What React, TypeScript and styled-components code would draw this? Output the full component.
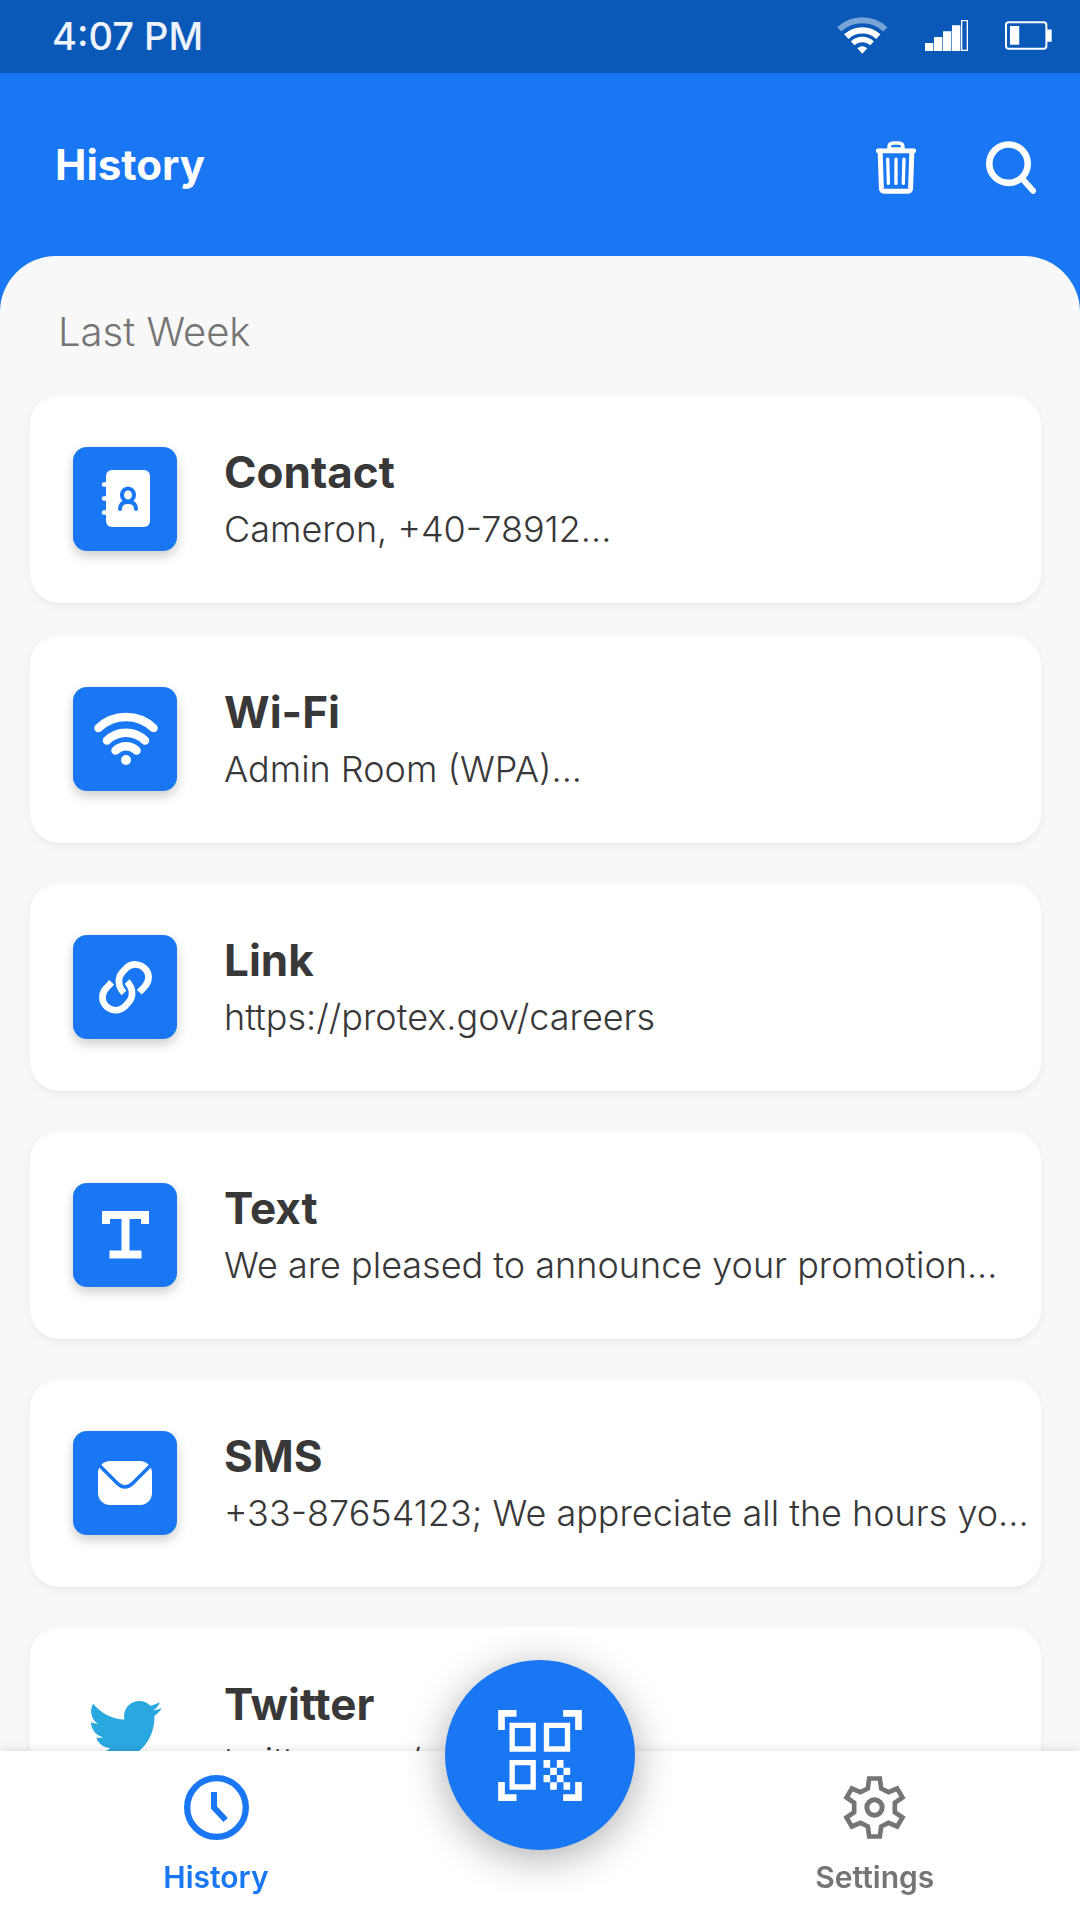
import React from "react";
import styled, { createGlobalStyle } from "styled-components";
import { FaTwitter } from "react-icons/fa";

const blue = "#1977f3";

const GlobalStyle = createGlobalStyle`
  * { box-sizing: border-box; }
  body {
    margin: 0;
    font-family: Inter, "Noto Sans", sans-serif;
    background: ${blue};
  }
  h1, h2, h3, p, ul { margin: 0; padding: 0; }
  svg { display: block; flex: none; }
`;

const Screen = styled.div`
  display: flex;
  flex-direction: column;
  height: 100vh;
  overflow: hidden;
  background: ${blue};
`;

const StatusBar = styled.div`
  display: flex;
  align-items: center;
  justify-content: space-between;
  height: 73px;
  flex: none;
  padding: 0 28px 2px 52px;
  background: #0a59b9;
  color: #eef3fc;
  font-size: 38px;
  font-weight: 500;
`;

const StatusIcons = styled.div`
  display: flex;
  align-items: center;
  gap: 37px;
`;

const Header = styled.header`
  display: flex;
  align-items: center;
  justify-content: space-between;
  height: 183px;
  flex: none;
  padding: 0 44px 0 55px;
  color: #fff;
`;

const Title = styled.h1`
  font-size: 42px;
  line-height: 54px;
  font-weight: 700;
`;

const Actions = styled.div`
  display: flex;
  align-items: center;
  gap: 70px;
  padding-top: 5px;
`;

const IconButton = styled.button`
  display: block;
  padding: 0;
  border: 0;
  background: none;
  color: inherit;
  cursor: pointer;
`;

const Sheet = styled.main`
  flex: 1;
  min-height: 0;
  overflow-y: auto;
  scrollbar-width: none;
  padding: 52px 39px 40px 30px;
  border-radius: 56px 56px 0 0;
  background: #f8f8f8;
`;

const Period = styled.h2`
  padding-left: 28px;
  margin-bottom: 39px;
  color: #757575;
  font-size: 40px;
  line-height: 48px;
  font-weight: 300;
`;

const List = styled.ul`
  list-style: none;
`;

const Card = styled.li`
  display: flex;
  align-items: center;
  gap: 47px;
  height: 208px;
  padding: 0 8px 0 43px;
  border-radius: 30px;
  background: #fff;
  box-shadow: 0 3px 10px rgba(0, 0, 0, 0.06);

  & + & { margin-top: 40px; }
  &:first-child + & { margin-top: 32px; }
`;

const Tile = styled.span<{ $plain?: boolean }>`
  display: flex;
  align-items: center;
  justify-content: center;
  width: 104px;
  height: 104px;
  flex: none;
  border-radius: 14px;
  color: ${(p) => (p.$plain ? "#29a8e0" : "#fff")};
  background: ${(p) => (p.$plain ? "none" : blue)};
  box-shadow: ${(p) => (p.$plain ? "none" : "0 5px 12px rgba(0, 0, 0, 0.2)")};
`;

const Entry = styled.div`
  min-width: 0;
  color: #383838;
  white-space: nowrap;
`;

const EntryTitle = styled.h3`
  font-size: 44px;
  line-height: 60px;
  font-weight: 700;
`;

const EntryText = styled.p`
  font-size: 36px;
  line-height: 54px;
  font-weight: 300;
`;

const Nav = styled.nav`
  position: relative;
  display: grid;
  grid-template-columns: 40% 1fr 38%;
  flex: none;
  background: #fff;
  box-shadow: 0 -2px 8px rgba(0, 0, 0, 0.1);
`;

const NavItem = styled.a<{ $active?: boolean }>`
  display: flex;
  flex-direction: column;
  align-items: center;
  gap: 17px;
  padding: 24px 0 23px;
  color: ${(p) => (p.$active ? blue : "#757575")};
  font-size: 30px;
  line-height: 40px;
  font-weight: 600;
  text-decoration: none;
`;

const Middle = styled.span``;

const ScanButton = styled.button`
  position: absolute;
  top: -91px;
  left: 50%;
  transform: translateX(-50%);
  display: flex;
  align-items: center;
  justify-content: center;
  width: 190px;
  height: 190px;
  padding: 0;
  border: 0;
  border-radius: 50%;
  background: ${blue};
  color: #fff;
  box-shadow: 0 8px 40px rgba(0, 0, 0, 0.32);
  cursor: pointer;
`;

const WifiStatus = () => (
  <svg width="51" height="37" viewBox="112 47 153 111" fill="none" stroke="#fff">
    <path d="M119 84A100 100 0 0 1 257 84" strokeWidth="18" opacity="0.45" />
    <path d="M140 106A70 70 0 0 1 236 106" strokeWidth="19" />
    <path d="M159 126A42 42 0 0 1 217 126" strokeWidth="16" />
    <path d="M188 157L173 141Q188 128 203 141Z" fill="#fff" stroke="none" />
  </svg>
);

const SignalStatus = () => (
  <svg width="43" height="31" viewBox="375 60 129 93" fill="#fff">
    <path d="M375 129h25v24h-25zM402 111h25v42h-25zM429 94h25v59h-25zM456 76h25v77h-25z" />
    <path d="M485 62h17v89h-17z" fill="none" stroke="#fff" strokeWidth="4" />
  </svg>
);

const BatteryStatus = () => (
  <svg width="47" height="29" viewBox="615 68 142 86" fill="#fff">
    <rect x="618" y="71" width="122" height="80" rx="8" fill="none" stroke="#fff" strokeWidth="6" />
    <path d="M741 93h15v37h-15zM630 82h28v57h-28z" />
  </svg>
);

const TrashIcon = () => (
  <svg width="40" height="53" viewBox="227 419 120 160" fill="none" stroke="currentColor" strokeLinecap="round">
    <path d="M266 446V438Q266 425 279 425H295Q308 425 308 438V446" strokeWidth="11" />
    <path d="M233 449H341" strokeWidth="14" />
    <path d="M239 449L243 563Q244 571 252 571H322Q330 571 331 563L335 449" strokeWidth="15" />
    <path d="M262 474L264 547M287 474V547M311 474L309 547" strokeWidth="10" />
    <path d="M270 441H304" strokeWidth="6" />
  </svg>
);

const SearchIcon = () => (
  <svg width="50" height="53" viewBox="557 423 151 159" fill="none" stroke="currentColor" strokeLinecap="round">
    <circle cx="625" cy="491" r="58" strokeWidth="20" />
    <path d="M666 536L699 573" strokeWidth="18" />
  </svg>
);

const ContactIcon = () => (
  <svg width="104" height="104" viewBox="0 0 104 104" fill="none" strokeLinecap="round">
    <path d="M31 37.500H36M31 51.500H36M31 65.500H36" stroke="#fff" strokeWidth="4.500" />
    <rect x="33" y="23" width="44" height="57" rx="6" fill="#fff" />
    <ellipse cx="55" cy="48" rx="6" ry="6.500" stroke={blue} strokeWidth="4" />
    <path d="M47 62Q47 55 55 55Q63 55 63 62" stroke={blue} strokeWidth="4" />
  </svg>
);

const WifiIcon = () => (
  <svg width="104" height="104" viewBox="0 0 104 104" fill="none" stroke="currentColor" strokeWidth="8.500" strokeLinecap="round">
    <path d="M25.500 41A40 40 0 0 1 80.500 41" />
    <path d="M34 53.500A27 27 0 0 1 72 53.500" />
    <path d="M42.500 63.500A15 15 0 0 1 63.500 63.500" />
    <circle cx="53" cy="73" r="5" fill="currentColor" stroke="none" />
  </svg>
);

const LinkIcon = () => (
  <svg width="104" height="104" viewBox="0 0 312 312" fill="none" stroke="currentColor" strokeWidth="20">
    <path d="M199 172L214 156C230 140 231 116 216 101C201 85 176 84 160 99L148 112C134 127 133 153 153 174" />
    <path d="M116 142L101 158C85 174 84 198 99 213C114 229 139 230 155 215L167 202C181 187 182 161 162 140" />
  </svg>
);

const TextIcon = () => (
  <svg width="104" height="104" viewBox="0 0 104 104" fill="none" stroke="currentColor" strokeWidth="8">
    <path d="M33 41V32H72V41M52.500 32V71M36.500 71.500H68.500" />
  </svg>
);

const MailIcon = () => (
  <svg width="104" height="104" viewBox="0 0 104 104" fill="none">
    <rect x="25" y="30" width="54" height="44" rx="12" fill="#fff" />
    <path d="M25 33L44 52Q52 60 60 52L79 33" stroke={blue} strokeWidth="3.500" />
  </svg>
);

const ScanIcon = () => (
  <svg width="84" height="91" viewBox="298 327 251 273" fill="none" stroke="currentColor">
    <path
      d="M308 387V337H353M493 337H539V387M308 543V590H353M493 590H539V543"
      strokeWidth="20"
    />
    <path d="M340 373H403V444H340ZM443 373H506V444H443ZM340 485H403V558H340Z" strokeWidth="16" />
    <path
      d="M434 477h20v23h-20zM474 477h20v23h-20zM454 500h20v22h-20zM494 500h20v22h-20zM434 522h20v22h-20zM474 522h20v22h-20zM454 544h20v22h-20zM494 544h20v22h-20z"
      fill="currentColor"
      stroke="none"
    />
  </svg>
);

const ClockIcon = () => (
  <svg width="65" height="65" viewBox="372 345 195 195" fill="none" stroke="currentColor">
    <circle cx="469.500" cy="442.500" r="88" strokeWidth="19" />
    <path d="M462 396V443L497 480" strokeWidth="18" />
  </svg>
);

const GearIcon = () => (
  <svg width="65" height="65" viewBox="304.500 163.500 195 195" fill="none" stroke="currentColor">
    <path
      d="M386 174H418L422 204L444 215L470 204L486 231L463 247V275L486 291L470 318L444 307L422 318L418 348H386L382 318L360 307L334 318L318 291L341 275V247L318 231L334 204L360 215L382 204Z"
      strokeWidth="14"
    />
    <circle cx="402" cy="261" r="23" strokeWidth="15" />
  </svg>
);

const entries = [
  { title: "Contact", text: "Cameron, +40-78912...", icon: <ContactIcon /> },
  { title: "Wi-Fi", text: "Admin Room (WPA)...", icon: <WifiIcon /> },
  { title: "Link", text: "https://protex.gov/careers", icon: <LinkIcon /> },
  { title: "Text", text: "We are pleased to announce your promotion...", icon: <TextIcon /> },
  { title: "SMS", text: "+33-87654123; We appreciate all the hours yo...", icon: <MailIcon /> },
  { title: "Twitter", text: "twitter.com/", icon: <FaTwitter size={74} />, plain: true },
];

export default function App() {
  return (
    <Screen>
      <GlobalStyle />
      <StatusBar>
        <span>4:07 PM</span>
        <StatusIcons>
          <WifiStatus />
          <SignalStatus />
          <BatteryStatus />
        </StatusIcons>
      </StatusBar>
      <Header>
        <Title>History</Title>
        <Actions>
          <IconButton aria-label="Delete history">
            <TrashIcon />
          </IconButton>
          <IconButton aria-label="Search">
            <SearchIcon />
          </IconButton>
        </Actions>
      </Header>
      <Sheet>
        <Period>Last Week</Period>
        <List>
          {entries.map((entry) => (
            <Card key={entry.title}>
              <Tile $plain={entry.plain}>{entry.icon}</Tile>
              <Entry>
                <EntryTitle>{entry.title}</EntryTitle>
                <EntryText>{entry.text}</EntryText>
              </Entry>
            </Card>
          ))}
        </List>
      </Sheet>
      <Nav>
        <NavItem href="#history" $active>
          <ClockIcon />
          History
        </NavItem>
        <Middle />
        <NavItem href="#settings">
          <GearIcon />
          Settings
        </NavItem>
        <ScanButton aria-label="Scan code">
          <ScanIcon />
        </ScanButton>
      </Nav>
    </Screen>
  );
}
